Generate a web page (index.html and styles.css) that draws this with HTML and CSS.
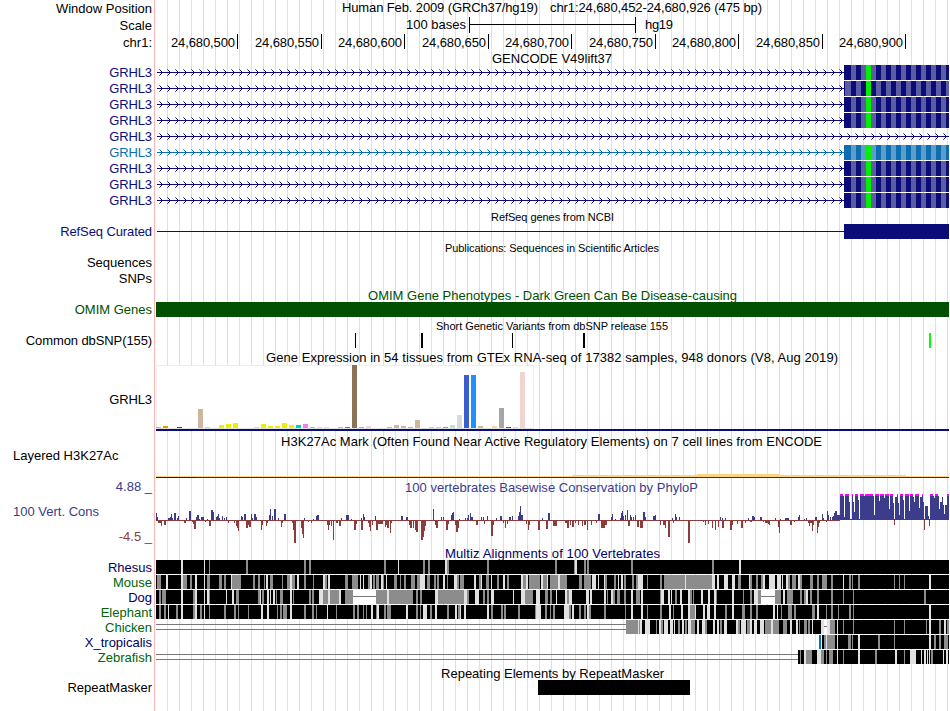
FILE: index.html
```
<!DOCTYPE html>
<html lang="en">

<head>
    <meta charset="utf-8">
    <title>Human chr1:24,680,452-24,680,926 Genome Browser</title>
    <link rel="stylesheet" href="styles.css">
</head>

<body>
    <!-- every svg uses the page x scale, so the data area runs from 155 to 949 -->
    <div class="browser">
        <div class="row ruler-row">
            <div class="label">Window Position</div>
            <svg viewBox="155 0 794 17">
                <text x="342" y="12" textLength="196">Human Feb. 2009 (GRCh37/hg19)</text>
                <text x="550" y="12" textLength="212">chr1:24,680,452-24,680,926 (475 bp)</text>
            </svg>
        </div>
        <div class="row ruler-row">
            <div class="label">Scale</div>
            <svg viewBox="155 0 794 17">
                <text x="406" y="12" textLength="60">100 bases</text>
                <path d="M469 0h1v7h165v-7h1v16h-1v-8h-165v8h-1z" />
                <text x="645" y="12" textLength="28">hg19</text>
            </svg>
        </div>
        <div class="row ruler-row">
            <div class="label">chr1:</div>
            <svg id="ruler" viewBox="155 0 794 17"></svg>
        </div>

        <svg class="title" viewBox="155 51 794 14"><text x="492" y="63" textLength="120">GENCODE V49lift37</text></svg>
        <div id="genes"></div>

        <svg class="title small" viewBox="155 209 794 15"><text x="491" y="221" textLength="123">RefSeq genes from NCBI</text></svg>
        <div class="row item-row navy">
            <div class="label tight">RefSeq Curated</div>
            <svg viewBox="155 0 794 15">
                <rect x="157" y="7" width="687" height="1" />
                <rect x="844" y="0" width="105" height="15" />
            </svg>
        </div>

        <svg class="title small" viewBox="155 239 794 16"><text x="445" y="252" textLength="214">Publications: Sequences in Scientific Articles</text></svg>
        <div class="row gene-row">
            <div class="label">Sequences</div>
        </div>
        <div class="row gene-row">
            <div class="label">SNPs</div>
        </div>

        <svg class="title omim" viewBox="155 287 794 15"><text x="368" y="300" textLength="369">OMIM Gene Phenotypes - Dark Green Can Be Disease-causing</text></svg>
        <div class="row item-row omim">
            <div class="label">OMIM Genes</div>
            <svg viewBox="155 0 794 15">
                <rect x="156" y="0" width="793" height="15" />
            </svg>
        </div>

        <svg class="title small" viewBox="155 317 794 16"><text x="436" y="330" textLength="232">Short Genetic Variants from dbSNP release 155</text></svg>
        <div class="row item-row">
            <div class="label tight">Common dbSNP(155)</div>
            <svg viewBox="155 0 794 15">
                <path d="M355 0h1v15h-1zM421 0h2v15h-2zM512 0h1v15h-1zM583 0h2v15h-2z" />
                <rect class="snp-green" x="929" y="0" width="2" height="15" />
            </svg>
        </div>

        <svg class="title" viewBox="155 348 794 16"><text x="266" y="362" textLength="572">Gene Expression in 54 tissues from GTEx RNA-seq of 17382 samples, 948 donors (V8, Aug 2019)</text></svg>
        <div class="row gtex-row">
            <div class="label tight">GRHL3</div>
            <svg id="gtex" viewBox="155 364 794 68"></svg>
        </div>

        <svg class="title" viewBox="155 432 794 16"><text x="281" y="446" textLength="541">H3K27Ac Mark (Often Found Near Active Regulatory Elements) on 7 cell lines from ENCODE</text></svg>
        <div class="row h3k-row">
            <div class="label left">Layered H3K27Ac</div>
            <svg viewBox="155 448 794 31">
                <path class="h3k" d="M156 476h416v-1h125v-1h83v1h126v1h43v1h-793z" />
                <rect x="156" y="477" width="793" height="1" class="h3k-base" />
                <rect x="156" y="477" width="40" height="1" class="h3k-dark" />
            </svg>
        </div>

        <div class="row cons-row">
            <div class="cons-labels">
                <div class="label blue">4.88 _</div>
                <div class="label left blue">100 Vert. Cons</div>
                <div class="label red">-4.5 _</div>
            </div>
            <svg id="phylop" viewBox="155 479 794 66">
                <text class="blue" x="405" y="492" textLength="293">100 vertebrates Basewise Conservation by PhyloP</text>
            </svg>
        </div>

        <svg class="title multiz" viewBox="155 545 794 15"><text x="445" y="558" textLength="215">Multiz Alignments of 100 Vertebrates</text></svg>
        <div id="multiz"></div>

        <svg class="title" viewBox="155 665 794 15"><text x="441" y="678" textLength="223">Repeating Elements by RepeatMasker</text></svg>
        <div class="row item-row">
            <div class="label">RepeatMasker</div>
            <svg viewBox="155 0 794 15">
                <rect x="538" y="0" width="152" height="15" />
            </svg>
        </div>
    </div>

    <script src="tracks.js"></script>
</body>

</html>
```
FILE: styles.css
```
body {
    margin: 0;
    background: #fff;
}

/* White label column, red divider and the light blue guide lines */
.browser {
    width: 949px;
    height: 711px;
    overflow: hidden;
    font-family: "Liberation Sans", Arial, sans-serif;
    font-size: 13px;
    color: #000;
    background:
        linear-gradient(to right, #fff 154px, #ffb4b4 154px, #ffb4b4 155px, #fff 155px, #fff 156px, transparent 156px),
        repeating-linear-gradient(to right, #fff 0, #fff 11px, #dcdcfa 11px, #dcdcfa 12px);
}

.row {
    display: grid;
    grid-template-columns: 152px 794px;
    column-gap: 3px;
}

svg {
    display: block;
    width: 794px;
    height: 100%;
    fill: currentColor;
    overflow: visible;
}

.label {
    text-align: right;
    white-space: nowrap;
    line-height: 15px;
}

.label.left {
    text-align: left;
    padding-left: 13px;
}

.label.tight {
    letter-spacing: -0.1px;
}

/* Row heights */
.ruler-row {
    height: 17px;
}

.ruler-row .label {
    line-height: 17px;
}

.gene-row {
    height: 16px;
}

.item-row,
.align-row {
    height: 15px;
}

.gtex-row {
    height: 68px;
}

.gtex-row .label {
    padding-top: 3px;
    line-height: 65px;
}

.h3k-row {
    height: 31px;
}

.cons-row {
    height: 66px;
}

.cons-labels {
    display: flex;
    flex-direction: column;
    justify-content: space-between;
    height: 65px;
}

/* Track titles */
.title {
    margin-left: 155px;
    height: auto;
}

.small {
    font-size: 11px;
}

/* Track colours */
.navy {
    color: #0c0c78;
}

.canonical {
    color: #0c6eb0;
}

.omim {
    color: #005000;
}

.multiz {
    color: #000064;
}

.green {
    color: #00640a;
}

.blue {
    color: #3c3c8c;
    fill: #3c3c8c;
}

.red {
    color: #8c3c3c;
    fill: #8c3c3c;
}

.snp-green {
    fill: #00ff00;
}

.codon {
    fill: #00f000;
}

.codon-light {
    fill: #fff;
    opacity: 0.33;
}

.arrow-soft {
    opacity: 0.6;
}

.cap {
    fill: #ff00ff;
}

.h3k {
    fill: #ffd27d;
}

.h3k-base {
    fill: #33332d;
}

.h3k-dark {
    fill: #1e143c;
}

.black {
    fill: #000;
}

.grey {
    fill: #8c8c8c;
}

.light {
    fill: #e1e1e1;
}

.white {
    fill: #fff;
}

.gap {
    fill: #787878;
}

.insert {
    fill: #0072bc;
}

.frame {
    fill: #fff;
    stroke: #eee;
}
```
FILE: tracks.js
```
function rect(x, y, w, h, cls) {
    return `<rect x="${x}" y="${y}" width="${w}" height="${h}" class="${cls || ''}"/>`;
}

// Ruler
const ticks = [237, 321, 404, 488, 571, 655, 738, 822, 905];
document.getElementById('ruler').innerHTML = ticks.map((x, i) =>
    `<text x="${x - 66}" y="13" textLength="64">24,680,${500 + i * 50}</text>` + rect(x, 0, 1, 15)
).join('');

// Transcripts: 'a' and 'b' are the two codon phases, '-' has no exon here
function transcript(phase) {
    const end = phase === '-' ? 949 : 844;
    let out = rect(157, 7, end - 157, 1);
    let tips = '';
    let tails = '';
    for (let x = 161; x < end; x += 8) {
        tips += `M${x} 6h1v1h-1zM${x} 8h1v1h-1zM${x - 1} 5h1v1h-1zM${x - 1} 9h1v1h-1z`;
        tails += `M${x - 2} 4h1v1h-1zM${x - 2} 10h1v1h-1z`;
    }
    out += `<path d="${tips}"/><path class="arrow-soft" d="${tails}"/>`;
    if (phase === '-') return out;

    out += rect(844, 0, 105, 15);
    if (phase === 'b') out += rect(845, 0, 6, 15, 'codon-light');
    for (let x = phase === 'b' ? 856 : 851; x < 949; x += 10) {
        if (x === 866) continue;
        out += rect(x, 0, Math.min(5, 949 - x), 15, 'codon-light');
    }
    return out + rect(866, 0, 5, 15, 'codon');
}

document.getElementById('genes').innerHTML = ['a', 'b', 'a', 'a', '-', 'a', 'a', 'a', 'a'].map((phase, i) =>
    `<div class="row gene-row ${i === 5 ? 'canonical' : 'navy'}">
        <div class="label tight">GRHL3</div>
        <svg viewBox="155 0 794 16">${transcript(phase)}</svg>
    </div>`
).join('');

// GTEx: [tissue index, height, colour]
const gtex = [
    [0, 1, '#eda869'], [1, 2, '#f59600'], [3, 1, '#8b1c62'], [6, 19, '#cdb79e'], [7, 1, '#eeee00'],
    [9, 3, '#eeee00'], [10, 4, '#eeee00'], [11, 5, '#eeee00'], [14, 1, '#eeee00'], [15, 4, '#eeee00'],
    [16, 2, '#eeee00'], [17, 2, '#eeee00'], [18, 5, '#eeee00'], [19, 3, '#eeee00'], [20, 3, '#00cdcd'],
    [21, 4, '#ee82ee'], [22, 1, '#9ac0cd'], [23, 1, '#eed5d2'], [24, 1, '#eed5d2'], [26, 1, '#cdb79e'],
    [27, 1, '#8b7355'], [28, 63, '#8b7355'], [29, 1, '#cdaa7d'], [30, 2, '#eed5d2'], [33, 1, '#cdb79e'],
    [34, 3, '#cdb79e'], [35, 2, '#cdb79e'], [36, 1, '#b4cd32'], [37, 8, '#cdb79e'], [39, 1, '#ffd700'],
    [40, 1, '#ffb6c1'], [41, 1, '#cd9b1d'], [42, 3, '#b4eeb4'], [43, 13, '#d9d9d9'], [44, 53, '#3a5fcd'],
    [45, 53, '#1e90ff'], [46, 2, '#cdb79e'], [48, 2, '#ffd39b'], [49, 20, '#a6a6a6'], [50, 1, '#008b45'],
    [51, 1, '#eed5d2'], [52, 56, '#eed5d2']
];
document.getElementById('gtex').innerHTML =
    '<rect class="frame" x="156.5" y="365.5" width="377" height="63"/>' +
    rect(156, 428, 377, 1, 'light') +
    gtex.map(([i, h, colour]) => `<rect x="${156 + i * 7}" y="${428 - h}" width="5" height="${h}" fill="${colour}"/>`).join('') +
    '<g class="navy"><path fill="currentColor" d="M156 429h793v2h-793z"/></g>';

// PhyloP: x,width,height
const scores = `
156,1,7 157,1,3 168,2,2 170,1,3 171,1,6 172,1,2 174,2,7 177,1,2 178,1,4 186,1,2 189,2,9 196,1,3 197,2,5 199,1,1
201,3,3 207,1,1 211,2,10 213,1,8 216,1,3 217,1,4 218,1,6 219,1,2 222,1,4 224,1,2 226,1,3 241,1,4 242,1,3 244,2,6
251,1,6 252,1,2 254,2,6 256,1,3 269,1,5 270,1,11 272,1,4 274,2,11 278,1,2 284,2,6 304,1,2 313,1,1 316,1,4 317,2,5
341,1,2 346,3,5
158,4,-3 161,1,-6 164,2,-5 184,2,-3 192,1,-2 193,1,-4 194,2,-9 205,1,-2 209,2,-6 228,1,-3 234,1,-3 236,1,-6
237,1,-8 238,1,-11 246,2,-8 248,1,-5 249,2,-7 261,1,-10 262,1,-5 266,1,-6 267,1,-3 281,1,-7 282,1,-3 292,1,-3
293,1,-10 294,2,-23 301,1,-8 302,1,-14 303,1,-18 308,1,-2 311,1,-3 327,1,-5 328,1,-10 329,1,-5 331,1,-6
333,1,-20 336,1,-3 337,1,-3 339,2,-6
351,1,1 361,1,2 363,1,6 364,1,3 375,1,4 401,2,4 406,2,3 433,1,11 441,1,3 443,1,3 451,1,5 452,1,7 453,1,8 459,1,1
465,1,2 467,1,2 468,1,5 470,1,7 471,2,3 481,1,3 483,1,3 487,1,4 496,1,2 500,2,4 509,2,3 512,1,4 518,1,4 519,1,8
520,1,14 521,2,5 542,1,2 548,2,7
354,2,-10 356,1,-4 361,2,-10 368,1,-3 369,1,-7 370,1,-11 372,1,-5 376,2,-10 378,5,-4 385,1,-7 386,1,-5 387,2,-8
390,1,-13 391,1,-3 409,1,-5 410,2,-8 413,1,-8 415,1,-10 416,2,-12 421,2,-20 423,1,-17 424,1,-11 425,1,-6
435,1,-5 436,2,-8 446,2,-10 448,1,-4 455,1,-5 456,2,-12 458,1,-8 476,2,-5 484,1,-4 491,2,-16 493,1,-5 503,1,-3
505,1,-8 507,1,-4 526,1,-4 528,1,-10 529,1,-5 538,2,-10 546,2,-9
598,2,6 611,1,3 612,1,6 615,1,1 620,1,2 621,1,7 622,1,9 623,1,4 625,1,5 627,1,10 630,1,5 631,1,3 633,1,3 635,1,5
643,2,8 645,1,3 653,2,4 655,1,5 672,1,2 675,1,6 676,1,3 679,1,3 720,1,3 722,1,2 725,1,2 748,1,2
553,4,-6 565,2,-3 567,2,-8 570,1,-5 572,2,-7 575,1,-3 578,1,-5 582,1,-6 584,2,-5 587,1,-10 591,1,-5 596,1,-3
601,4,-8 605,2,-5 628,2,-6 637,2,-7 640,3,-8 660,1,-5 663,3,-5 665,1,-8 668,2,-17 673,1,-3 688,2,-23 703,1,-2
705,1,-5 708,1,-4 712,1,-8 715,1,-10 718,1,-7 722,2,-8 730,2,-10 732,1,-5 737,1,-4 741,2,-8 745,1,-3
752,2,4 754,1,3 760,2,3 775,1,2 780,1,1 785,4,2 798,1,3 799,1,5 804,1,1 806,1,2 815,2,3 822,1,6 823,1,2 827,1,9
828,1,5 830,1,3 832,1,3 833,1,4 834,1,7 835,2,9 837,1,5 838,2,5
750,2,-2 763,1,-2 765,3,-3 768,1,-4 769,1,-5 778,1,-7 779,1,-13 790,2,-5 794,1,-2 808,1,-3 809,1,-6 810,2,-3
812,1,-11 813,1,-5 817,1,-13 818,1,-7 819,1,-3 826,1,-2 894,1,-5 924,1,-10 929,1,-6
843,1,24 844,1,3 849,1,18 853,1,18 854,1,8 858,1,20 864,1,24 873,1,24 874,1,5 879,1,19 884,1,22 889,1,11
893,1,17 895,2,23 898,1,17 899,1,5 903,1,20 909,1,9 913,1,23 914,1,18 919,1,12 920,2,23 923,1,18 925,3,14
928,1,4 933,1,24 934,1,22 938,1,24 939,1,11 940,2,18 942,1,23 943,1,15 944,1,6 945,2,15`;
// scores above the top of the scale
const clipped = `840,3 845,4 852,1 855,3 860,4 865,8 875,4 880,4 885,4 890,3 897,1 900,3 905,4 910,3 915,4 922,1
930,3 935,3 947,2`;

let cons = rect(156, 520, 684, 1, 'red') + rect(840, 519, 109, 1, 'blue');
scores.trim().split(/\s+/).forEach((item) => {
    const [x, w, h] = item.split(',').map(Number);
    cons += h > 0 ? rect(x, 520 - h, w, h, 'blue') : rect(x, 520, w, -h, 'red');
});
clipped.split(/\s+/).forEach((item) => {
    const [x, w] = item.split(',').map(Number);
    cons += rect(x, 496, w, 24, 'blue') + rect(x, 494, w, 2, 'cap');
});
document.getElementById('phylop').innerHTML += cons;

// Multiz: g = weak match, l = mismatch, w = unaligned gap, i = insert; black everywhere else
const species = [
    ['Rhesus', 156, `l181,2 l204,1 g209,1 g246,2 g304,2 g309,2 g384,2 l398,1 g423,2 g428,2 l445,2 g447,2 g487,2
        g555,2 g574,1 l575,2 g584,2 g587,2 g631,2 g712,2 l739,2`],
    ['Mouse', 156, `g157,4 l166,2 l181,2 g183,4 g190,2 l195,2 l204,1 g207,3 g219,3 g224,2 l231,1 g232,9 g253,2
        g258,2 g264,1 l266,2 g270,3 g282,1 g287,3 l290,2 g292,3 l297,2 g304,2 g313,1 l323,2 g325,2 l328,2 g345,3
        g352,6 l360,1 l363,1 g368,2 l370,2 g373,2 g376,3 l381,2 g383,1 l386,1 g394,3 g400,1 g404,2 g411,4 g417,3
        l420,5 g427,3 g434,2 g437,2 l443,2 g447,1 l454,3 g457,2 g460,4 l474,2 g479,2 l481,1 g486,3 l491,1 g497,2
        l503,2 g507,2 l521,2 g523,3 l526,2 g529,8 g537,3 l541,2 g543,4 l547,1 g550,8 l558,2 g560,7 g579,3 g584,7
        l592,4 l598,1 l604,1 g605,2 g614,2 l618,1 l621,2 g624,2 g632,2 g636,2 l638,5 g647,1 g660,2 g664,48 l685,1
        l712,3 l717,2 l724,4 l732,3 g738,3 l749,1 g750,2 g756,2 g761,2 l763,2 l769,6 l777,4 l782,1 l786,2 g788,2
        g792,4 l798,2 g800,2 g810,3 g817,2 g822,5 g831,2 l843,1 g849,2 g852,1 g858,2 g894,1 g899,1 g904,1 l929,2`],
    ['Dog', 156, `g159,2 g162,4 l181,2 g193,2 l195,2 l204,1 l207,2 g209,1 l226,1 l232,2 g236,3 g258,2 l260,1 g262,2
        l267,2 l270,1 l273,2 g276,1 g280,3 l290,2 g293,1 g309,2 g312,2 l319,4 g323,5 l328,2 g330,9 l339,2 g345,8
        w353,23 g376,37 l387,2 g416,2 g420,2 l435,3 g438,26 l464,3 g467,2 l475,4 g483,2 g487,2 l491,3 l513,1
        l521,4 g525,8 l536,4 g545,3 g550,2 l556,1 l565,2 g567,2 l569,3 l586,3 l590,2 l604,2 g607,1 l611,2 g613,2
        g617,3 g624,2 l631,2 g636,4 l641,2 g660,1 l661,3 l668,2 l671,1 g675,2 l680,2 l688,2 g690,2 g693,1 l701,2
        l708,2 l714,2 g716,1 l732,2 g743,1 g750,2 l754,4 g758,3 w761,14 g775,6 l783,2 g787,6 g800,2 g804,2 l806,2
        g810,2 g817,2 g831,2 g843,1 g853,1 g924,2`],
    ['Elephant', 156, `g159,2 g164,2 l168,1 g176,2 l181,2 g193,2 l195,2 g200,2 l204,1 g209,1 g224,2 g234,2 g238,1
        g248,1 l261,2 l267,2 g277,1 g280,2 g283,4 l290,2 g304,2 g312,2 g316,1 l327,1 g336,1 g353,2 g357,2 g363,1
        g366,1 l371,2 g376,1 l377,2 g384,2 g387,4 l406,2 g416,2 g420,1 l423,4 g430,2 l435,2 g447,2 l455,2 g458,2
        l460,1 l464,2 l487,2 g491,2 g501,2 g504,2 g518,2 g535,1 l536,5 g545,2 g550,1 g553,2 l564,5 g569,2 l572,2
        g579,2 g584,2 l587,2 g589,2 g604,2 g625,1 l631,2 l641,2 g647,1 g660,2 l669,2 g673,1 l681,2 l688,2 g690,5
        l695,1 l703,2 l707,3 l714,2 g725,2 l732,2 g742,3 g750,2 g756,2 l773,2 l777,1 g781,1 g788,4 g794,2 g812,3
        l817,2 g826,1 g831,2 g838,1 g849,2 g853,1 l929,2`],
    ['Chicken', 626, `g626,12 l638,1 g639,1 l640,2 l645,5 g656,1 l659,2 g661,2 l664,4 l670,3 l674,1 g678,2 l682,2
        g685,2 l688,3 g691,4 l697,2 l702,3 g705,2 l713,2 l717,2 g720,2 l724,3 l736,2 g738,2 l741,5 g747,3 l750,2
        l754,3 l760,4 g765,6 l771,2 g773,6 g783,4 l790,2 l796,2 g799,1 g804,3 g808,2 l812,1 l821,3 w824,3 l827,3
        g830,5 l837,1 g843,1 g853,1 g894,1 g904,1 g926,1 l929,2 g939,2 l944,2 g947,2`],
    ['X_tropicalis', 822, `i819,2 g824,2 l826,1 g827,8 l837,1 g848,3 g852,1 l858,2 g878,2 g894,1 l929,2 g934,2
        g939,2 g944,4`],
    ['Zebrafish', 798, `g800,1 l804,2 g806,6 l817,4 g821,3 g826,1 g829,4 l837,1 g843,1 l858,2 g875,2 l895,2 g904,1
        l910,6 l921,1 l924,2 l927,1 l929,1 g931,2 l943,1 l946,2`]
];
const kinds = { g: 'grey', l: 'light', w: 'white', i: 'insert' };
const navySpecies = ['Rhesus', 'Dog', 'X_tropicalis'];

document.getElementById('multiz').innerHTML = species.map(([name, start, marks]) => {
    let out = rect(start, 0, 949 - start, 14, 'black');
    // double line where nothing aligns
    if (name === 'Chicken' || name === 'Zebrafish') {
        out += rect(156, 4, start - 156, 1, 'gap') + rect(156, 9, start - 156, 1, 'gap');
    }
    marks.split(/\s+/).forEach((mark) => {
        const [x, w] = mark.slice(1).split(',').map(Number);
        out += rect(x, 0, w, 14, kinds[mark[0]]);
        if (mark[0] === 'w') out += rect(x, 6, w, 1, 'gap');
    });
    return `<div class="row align-row ${navySpecies.includes(name) ? 'multiz' : 'green'}">
        <div class="label">${name}</div>
        <svg viewBox="155 0 794 15">${out}</svg>
    </div>`;
}).join('');
```
